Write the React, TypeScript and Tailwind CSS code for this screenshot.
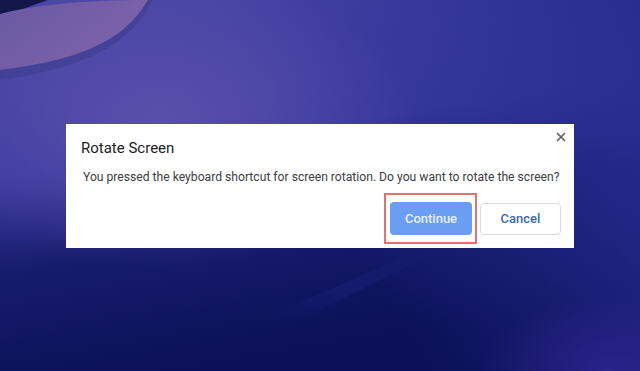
import { X } from 'lucide-react';

// Wallpaper drawing behind the dialog
function Wallpaper() {
  return (
    <svg className="absolute inset-0 h-full w-full" viewBox="0 0 640 371" preserveAspectRatio="none">
      <defs>
        <linearGradient id="base" x1="0" y1="0" x2="0.3" y2="1">
          <stop offset="0" stopColor="#4a47a6" />
          <stop offset="0.45" stopColor="#3a3aa0" />
          <stop offset="0.68" stopColor="#171b6c" />
          <stop offset="1" stopColor="#0b1058" />
        </linearGradient>
        <radialGradient id="glow" cx="0.25" cy="0.32" r="0.4">
          <stop offset="0" stopColor="#5d52ab" stopOpacity="0.9" />
          <stop offset="1" stopColor="#5d52ab" stopOpacity="0" />
        </radialGradient>
        <linearGradient id="right" x1="1" y1="0" x2="0.4" y2="0.2">
          <stop offset="0" stopColor="#2a2c92" />
          <stop offset="1" stopColor="#2a2c92" stopOpacity="0" />
        </linearGradient>
        <linearGradient id="wave" x1="0" y1="0" x2="1" y2="0.6">
          <stop offset="0" stopColor="#6a58a2" />
          <stop offset="1" stopColor="#7d64ab" />
        </linearGradient>
        <linearGradient id="streak" x1="0" y1="1" x2="1" y2="0">
          <stop offset="0" stopColor="#2a2f9a" stopOpacity="0" />
          <stop offset="0.5" stopColor="#2a2f9a" stopOpacity="0.5" />
          <stop offset="1" stopColor="#2a2f9a" stopOpacity="0" />
        </linearGradient>
        <radialGradient id="corner" cx="0.95" cy="1" r="0.2">
          <stop offset="0" stopColor="#33279a" stopOpacity="0.6" />
          <stop offset="1" stopColor="#33279a" stopOpacity="0" />
        </radialGradient>
      </defs>
      <rect width="640" height="371" fill="url(#base)" />
      <rect width="640" height="371" fill="url(#right)" />
      <rect width="640" height="371" fill="url(#glow)" />
      <rect width="640" height="371" fill="url(#corner)" />
      <path d="M0 0 H48 C24 8 10 14 0 18 Z" fill="#14164a" />
      <path d="M0 14 C30 6 80 0 148 0 C130 30 100 58 0 70 Z" fill="url(#wave)" />
      <path d="M0 70 C100 58 130 30 148 0 H152 C135 36 100 66 0 80 Z" fill="#3a3c8a" opacity="0.5" />
      <path d="M260 320 L420 250 L440 250 L300 320 Z" fill="url(#streak)" opacity="0.4" />
    </svg>
  );
}

export default function App() {
  return (
    <div className="relative h-[371px] w-[640px] overflow-hidden" style={{ fontFamily: 'Roboto, "Liberation Sans", sans-serif' }}>
      <Wallpaper />
      <div className="relative pl-[66px] pt-[124px]">
        <div className="relative flex h-[124px] w-[508px] flex-col bg-white">
          <button className="absolute right-[6px] top-[6px] text-[#5f6368]">
            <X size={14} strokeWidth={3} />
          </button>
          <h1 className="ml-[15px] mt-[14px] text-[15px] leading-[20px] text-[#202124]">Rotate Screen</h1>
          <p className="ml-[17px] mt-[11px] text-[12.15px] leading-[16px] text-[#3c4043]">
            You pressed the keyboard shortcut for screen rotation. Do you want to rotate the screen?
          </p>
          <div className="mr-[13px] mt-[17px] flex items-center justify-end gap-[8px]">
            <div className="relative">
              <button className="h-[33px] w-[82px] rounded-[4px] bg-[#6a9ef2] text-[13px] font-medium text-[#e8f0fe]">
                Continue
              </button>
              <div className="pointer-events-none absolute -bottom-[9px] -left-[6px] -right-[5px] -top-[9px] border-2 border-[#e4716f]" />
            </div>
            <button className="h-[32px] w-[81px] rounded-[4px] border border-[#dadce0] bg-white text-[13px] font-medium text-[#3d6aa3]">
              Cancel
            </button>
          </div>
        </div>
      </div>
    </div>
  );
}
